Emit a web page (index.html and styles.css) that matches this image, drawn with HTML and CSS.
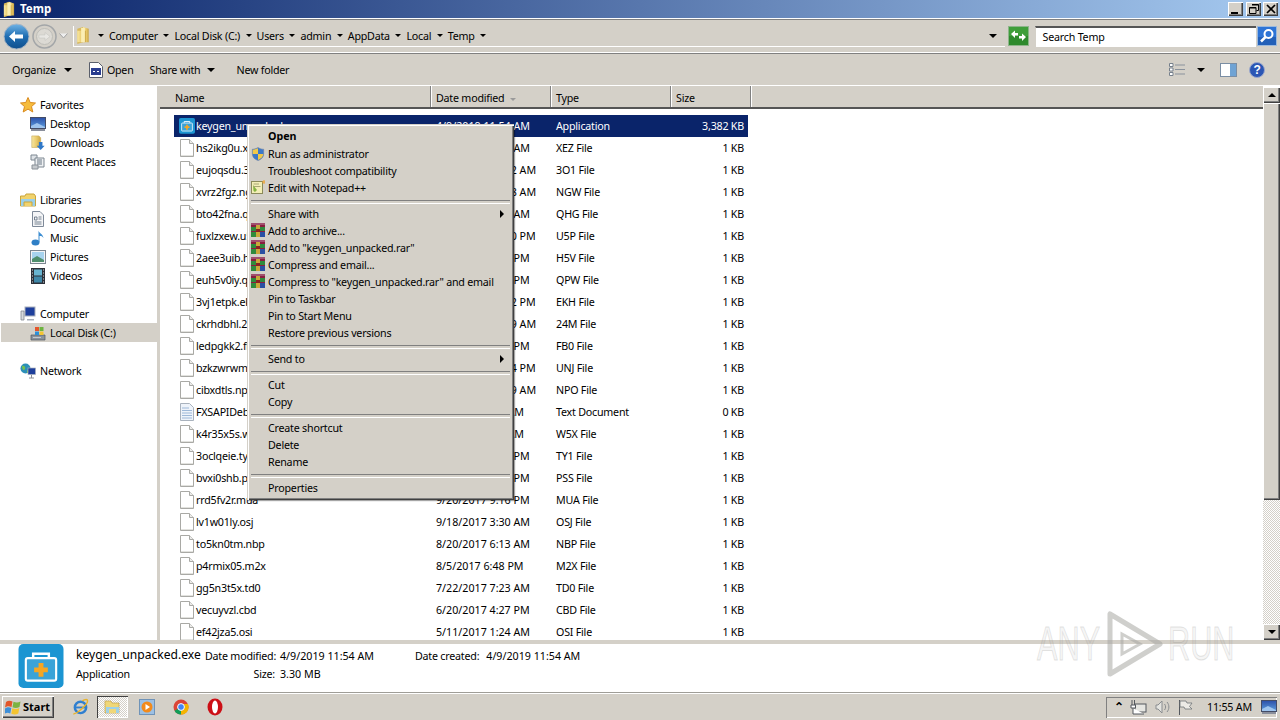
FILE: index.html
```html
<!DOCTYPE html>
<html lang="en">
<head>
<meta charset="utf-8">
<title>Temp</title>
<link rel="stylesheet" href="styles.css">
</head>
<body>
<svg class="defs" width="0" height="0" aria-hidden="true">
  <defs>
    <linearGradient id="gFolder" x1="0" y1="0" x2="1" y2="0"><stop offset="0" stop-color="#f8e7a0"/><stop offset=".55" stop-color="#e9c96a"/><stop offset="1" stop-color="#c9a544"/></linearGradient>
    <linearGradient id="gBack" x1="0" y1="0" x2="0" y2="1"><stop offset="0" stop-color="#6fb4e6"/><stop offset=".5" stop-color="#1f6db2"/><stop offset="1" stop-color="#0f4f8d"/></linearGradient>
    <linearGradient id="gDesk" x1="0" y1="0" x2="0" y2="1"><stop offset="0" stop-color="#2b4fa8"/><stop offset="1" stop-color="#5fa0e0"/></linearGradient>
    <symbol id="file" viewBox="0 0 14 18"><path d="M.5.5H9.5L13.500 4.500V17.500H.5Z" fill="#fff" stroke="#a9a9a5"/><path d="M9.500.5V4.500H13.500" fill="#ececea" stroke="#a9a9a5"/><path d="M1 16.500H13" stroke="#e2e2de"/></symbol>
    <symbol id="txt" viewBox="0 0 14 18"><path d="M.5.5H9.500L13.500 4.500V17.500H.5Z" fill="#eef3fa" stroke="#a9b2bd"/><path d="M2 5H9M2 7.500H12M2 10H12M2 12.500H12M2 15H12" stroke="#9db8d8"/></symbol>
    <symbol id="folder" viewBox="0 0 14 20"><path d="M1 3 7 1V17L1 19Z" fill="#d9b95c"/><path d="M7 1 13 3V17L7 17Z" fill="url(#gFolder)"/><path d="M1 5H10V17H1Z" fill="url(#gFolder)"/><path d="M5 2 9 2 9 17 5 17Z" fill="#fbeeb4"/></symbol>
    <symbol id="star" viewBox="0 0 16 16"><path d="M8 .5 10.200 5.500 15.500 6 11.500 9.600 12.800 15 8 12.100 3.200 15 4.500 9.600.5 6 5.800 5.500Z" fill="#f6bc3c" stroke="#d98a1e"/></symbol>
    <symbol id="desk" viewBox="0 0 16 14"><rect x=".5" y=".5" width="15" height="11" fill="url(#gDesk)" stroke="#444c66"/><path d="M1 9 7 6 15 10V11H1Z" fill="#9ec4ee"/><rect x="1" y="12" width="14" height="2" fill="#8a8f9c"/></symbol>
    <symbol id="dl" viewBox="0 0 16 18"><path d="M1 1H9L11 3V14H1Z" fill="url(#gFolder)" stroke="#c2a24e" stroke-width=".6"/><path d="M9 8H13V12H15.500L11 17 6.500 12H9Z" fill="#2f78c8"/></symbol>
    <symbol id="recent" viewBox="0 0 16 16"><path d="M1 1H7V6H1Z" fill="#dfe3e7" stroke="#7d8791"/><path d="M5 4H14V13H5Z" fill="#eef0f2" stroke="#7d8791"/><path d="M7 6H12M7 8H12M7 10H12" stroke="#6a7886"/><path d="M2 11H8V15H2Z" fill="#c5c9cd" stroke="#8a9198"/></symbol>
    <symbol id="lib" viewBox="0 0 16 14"><path d="M.5 3V13H15.500V3L14 1H6L5 3Z" fill="#f1d36d" stroke="#c9a53d"/><path d="M1 6H15V13H1Z" fill="#9bd0ea"/><path d="M4 13V9H12V13" fill="#f1d36d" stroke="#c9a53d"/></symbol>
    <symbol id="doc" viewBox="0 0 14 16"><path d="M1.500.5H9L12.500 4V15.500H1.500Z" fill="#f4f5f7" stroke="#7f8a99"/><path d="M3.500 6H6V9H3.500ZM7.500 6H10.500M7.500 8H10.500M3.500 11H10.500M3.500 13H10.500" stroke="#59677a" stroke-width=".8" fill="none"/></symbol>
    <symbol id="music" viewBox="0 0 14 16"><ellipse cx="4.500" cy="12.500" rx="4" ry="3" fill="#2f7fc6"/><path d="M7.500 12V.5C8 3 12 4 12.500 8 11 5.500 9 6 8.500 6V12Z" fill="#3d8ed2"/></symbol>
    <symbol id="pic" viewBox="0 0 16 14"><rect x=".5" y=".5" width="15" height="13" fill="#f3f4f6" stroke="#7d8791"/><rect x="2" y="2" width="12" height="10" fill="#a7d3ee"/><path d="M2 9 7 6 14 10V12H2Z" fill="#4f8f6d"/></symbol>
    <symbol id="vid" viewBox="0 0 14 16"><rect width="14" height="16" fill="#2c3038"/><rect x="3" y="1.500" width="8" height="6" fill="#68b4d0"/><rect x="3" y="8.500" width="8" height="6" fill="#3f87a8"/><path d="M1 2H2M1 5H2M1 8H2M1 11H2M1 14H2M12 2H13M12 5H13M12 8H13M12 11H13M12 14H13" stroke="#d4d6da"/></symbol>
    <symbol id="pc" viewBox="0 0 16 16"><rect x="5" y="1" width="10" height="9" fill="#1e3f9c" stroke="#a9b0bc"/><path d="M7 13H14V14.500H7Z" fill="#a9b0bc"/><path d="M1 5H4V14H1Z" fill="#d8dadd" stroke="#767c85" stroke-width=".7"/></symbol>
    <symbol id="disk" viewBox="0 0 16 16"><path d="M1 10H15V15H1Z" fill="#8b939c" stroke="#4f565e" stroke-width=".7"/><rect x="3" y="12" width="8" height="1" fill="#c4c9ce"/><rect x="5" y="2" width="4" height="4" fill="#e5552b"/><rect x="9.500" y="2" width="4" height="4" fill="#6cb33f"/><rect x="5" y="6.500" width="4" height="3.500" fill="#2d8fd8"/><rect x="9.500" y="6.500" width="4" height="3.500" fill="#f4c430"/></symbol>
    <symbol id="net" viewBox="0 0 16 16"><circle cx="5.500" cy="5.500" r="5" fill="#2c8fb8"/><path d="M2 3C4 2 6 4 5 6S2 7 2 3ZM7 7 10 9 7 10Z" fill="#76c152"/><rect x="8" y="5" width="7.500" height="6.500" fill="#1e3f9c" stroke="#a9b0bc" stroke-width=".7"/><path d="M11.500 12V15M9 15H14" stroke="#8b8f96"/></symbol>
    <symbol id="shield" viewBox="0 0 14 16"><path d="M7 .5C9 2 11 2.500 13.500 2.500V8C13.500 12 10 14.500 7 15.500 4 14.500.5 12 .5 8V2.500C3 2.500 5 2 7 .5Z" fill="#3d79c9" stroke="#6d7fa0" stroke-width=".6"/><path d="M7 1.500V8H1V3C3 3 5 2.500 7 1.500Z" fill="#f2c94a"/><path d="M7 8H13C13 11 10 13.800 7 14.800Z" fill="#f2c94a"/></symbol>
    <symbol id="npp" viewBox="0 0 14 14"><rect x=".5" y="1.500" width="11" height="12" fill="#f3eeb6" stroke="#8b8a5a"/><path d="M2 5 6 10 4 12 2.500 11Z" fill="#86b341"/><path d="M2.500 4H8M2.500 6.500H9.500" stroke="#a8a674"/><path d="M13 0V4M11 2H14" stroke="#f0a02a"/></symbol>
    <symbol id="rar" viewBox="0 0 14 14"><rect width="14" height="14" fill="#8a1d3f"/><rect width="14" height="2" fill="#a0506e"/><rect y="4" width="5" height="4" fill="#2f8a3c"/><rect x="9" y="4" width="5" height="4" fill="#2f8a3c"/><rect y="9" width="5" height="5" fill="#2f8a3c"/><rect x="9" y="9" width="5" height="5" fill="#2a4fa3"/><rect x="5" y="2" width="4" height="12" fill="#c9a83a"/><rect x="5" y="6" width="4" height="3" fill="#8b2222"/></symbol>
    <symbol id="case" viewBox="0 0 46 46"><rect width="46" height="45" rx="5" fill="#1c95d2"/><path d="M15 14V10H31V14" fill="none" stroke="#fff" stroke-width="2.500"/><rect x="7.500" y="14.500" width="31" height="23" rx="2" fill="#3aa3d8" stroke="#fff" stroke-width="2.200"/><path d="M20.500 19.500H25.500V24H30V29H25.500V33.500H20.500V29H16V24H20.500Z" fill="#f5a623"/></symbol>
    <symbol id="openapp" viewBox="0 0 14 16"><path d="M.5.5H9.500L13.500 4.500V15.500H.5Z" fill="#fff" stroke="#5a5f6b"/><rect x="2" y="6" width="10" height="7" fill="#2a3d8f"/><path d="M4 9.500H6M8 9.500H10" stroke="#fff"/></symbol>
  </defs>
</svg>

<div class="window">
  <header class="titlebar">
    <svg class="ic-title"><use href="#folder"/></svg>
    <span class="title-text">Temp</span>
    <div class="winbtns">
      <button class="winbtn"><span class="glyph-min"></span></button>
      <button class="winbtn"><svg width="10" height="10" viewBox="0 0 10 10"><path d="M3 .5H9.500V6.500H7.500M.5 3.500H7V9.500H.5Z" fill="none" stroke="#000"/><path d="M3 1H9.500M.5 4H7" stroke="#000"/></svg></button>
      <button class="winbtn"><svg width="10" height="10" viewBox="0 0 10 10"><path d="M1 1 9 9M9 1 1 9" stroke="#000" stroke-width="1.700"/></svg></button>
    </div>
  </header>

  <div class="addressrow">
    <svg class="navbtn" width="27" height="27" viewBox="0 0 27 27"><circle cx="13.500" cy="13.500" r="12.500" fill="url(#gBack)" stroke="#a9b6c4"/><path d="M6 13.500 12 8V11.500H20V15.500H12V19Z" fill="#fff"/></svg>
    <svg class="navbtn fwd" width="25" height="25" viewBox="0 0 25 25"><circle cx="12.500" cy="12.500" r="11.500" fill="#d4d0c8" stroke="#a3a6a8" stroke-width="1.500"/><circle cx="12.500" cy="12.500" r="8" fill="#dcdad4" stroke="#bdbdb8"/><path d="M18 12.500 13 8.500V11H7V14H13V16.500Z" fill="#e8e7e3" stroke="#c0c0bc" stroke-width=".5"/></svg>
    <svg class="navdrop" width="9" height="6" viewBox="0 0 9 6"><path d="M.5.500 4.500 5 8.500.500" fill="#eee" stroke="#a0a0a0"/></svg>
    <div class="addrbox">
      <svg class="ic-addr"><use href="#folder"/></svg>
      <span class="crumb"><i class="tri"></i><span class="crumb-t">Computer</span></span>
      <span class="crumb"><i class="tri"></i><span class="crumb-t">Local Disk (C:)</span></span>
      <span class="crumb"><i class="tri"></i><span class="crumb-t">Users</span></span>
      <span class="crumb"><i class="tri"></i><span class="crumb-t">admin</span></span>
      <span class="crumb"><i class="tri"></i><span class="crumb-t">AppData</span></span>
      <span class="crumb"><i class="tri"></i><span class="crumb-t">Local</span></span>
      <span class="crumb"><i class="tri"></i><span class="crumb-t">Temp</span></span>
      <i class="tri last"></i>
      <i class="tri big addr-drop"></i>
    </div>
    <svg class="refresh" width="21" height="20" viewBox="0 0 21 20"><rect x=".5" y=".5" width="20" height="19" fill="#3f9e3a" stroke="#8db58a"/><rect x="1" y="10" width="19" height="9" fill="#2f8a2d"/><path d="M3 8 7 4.500V7H10V9.500H7V12ZM18 11 14 15V12.500H11V10H14V7.500Z" fill="#fff"/></svg>
    <div class="searchbox">Search Temp</div>
    <svg class="searchbtn" width="20" height="20" viewBox="0 0 20 20"><rect x=".5" y=".5" width="19" height="19" fill="#2e74d6" stroke="#9cb9dc"/><rect x="1" y="11" width="18" height="8" fill="#2360b8"/><circle cx="11.500" cy="8" r="4" fill="#2e74d6" stroke="#fff" stroke-width="2"/><path d="M8.500 11 4 15.500" stroke="#fff" stroke-width="2.500"/></svg>
  </div>

  <nav class="toolbar">
    <span class="tool tool-org">Organize<i class="tri big"></i></span>
    <span class="tool tool-open"><svg class="ic14"><use href="#openapp"/></svg>Open</span>
    <span class="tool tool-share">Share with<i class="tri big"></i></span>
    <span class="tool tool-new">New folder</span>
    <div class="toolright">
      <svg width="17" height="13" viewBox="0 0 17 13"><path d="M.5.500H4V3.500H.5ZM.5 5H4V8H.5ZM.5 9.500H4V12.500H.5Z" fill="#fff" stroke="#76808c"/><path d="M6 2H16M6 6.500H16M6 11H16" stroke="#8a929c"/></svg>
      <i class="tri big view-drop"></i>
      <svg class="pane-ic" width="17" height="14" viewBox="0 0 17 14"><rect x=".5" y=".5" width="16" height="13" fill="#fff" stroke="#7a8ea4"/><rect x="10" y="1" width="6" height="12" fill="#6fa3d4"/></svg>
      <svg class="help-ic" width="16" height="16" viewBox="0 0 16 16"><circle cx="8" cy="8" r="7.500" fill="#2b56b4" stroke="#9aa7cc"/><text x="8" y="12" text-anchor="middle" class="help-q">?</text></svg>
    </div>
  </nav>

  <main class="content">
    <aside class="sidebar">
      <div class="navgroup">
        <div class="navitem top"><svg class="ic16"><use href="#star"/></svg>Favorites</div>
        <div class="navitem"><svg class="ic16"><use href="#desk"/></svg>Desktop</div>
        <div class="navitem"><svg class="ic16"><use href="#dl"/></svg>Downloads</div>
        <div class="navitem"><svg class="ic16"><use href="#recent"/></svg>Recent Places</div>
      </div>
      <div class="navgroup">
        <div class="navitem top"><svg class="ic16"><use href="#lib"/></svg>Libraries</div>
        <div class="navitem"><svg class="ic16"><use href="#doc"/></svg>Documents</div>
        <div class="navitem"><svg class="ic16"><use href="#music"/></svg>Music</div>
        <div class="navitem"><svg class="ic16"><use href="#pic"/></svg>Pictures</div>
        <div class="navitem"><svg class="ic16"><use href="#vid"/></svg>Videos</div>
      </div>
      <div class="navgroup">
        <div class="navitem top"><svg class="ic16"><use href="#pc"/></svg>Computer</div>
        <div class="navitem active"><svg class="ic16"><use href="#disk"/></svg>Local Disk (C:)</div>
      </div>
      <div class="navgroup">
        <div class="navitem top"><svg class="ic16"><use href="#net"/></svg>Network</div>
      </div>
    </aside>

    <section class="files">
      <div class="colhead">
        <div class="col col-name">Name</div>
        <div class="col col-date">Date modified<i class="sort"></i></div>
        <div class="col col-type">Type</div>
        <div class="col col-size">Size</div>
        <div class="col col-rest"></div>
      </div>
      <div class="rows">
        <div class="row selected"><span class="n"><svg class="ic-app"><use href="#case"/></svg>keygen_unpacked.exe</span><span class="d">4/9/2019 11:54 AM</span><span>Application</span><span class="s">3,382 KB</span></div>
        <div class="row"><span class="n"><svg class="ic-file"><use href="#file"/></svg>hs2ikg0u.xez</span><span class="d">3/19/2019 8:05 AM</span><span>XEZ File</span><span class="s">1 KB</span></div>
        <div class="row"><span class="n"><svg class="ic-file"><use href="#file"/></svg>eujoqsdu.3o1</span><span class="d">3/12/2019 10:22 AM</span><span>3O1 File</span><span class="s">1 KB</span></div>
        <div class="row"><span class="n"><svg class="ic-file"><use href="#file"/></svg>xvrz2fgz.ngw</span><span class="d">2/26/2019 11:38 AM</span><span>NGW File</span><span class="s">1 KB</span></div>
        <div class="row"><span class="n"><svg class="ic-file"><use href="#file"/></svg>bto42fna.qhg</span><span class="d">2/14/2019 7:25 AM</span><span>QHG File</span><span class="s">1 KB</span></div>
        <div class="row"><span class="n"><svg class="ic-file"><use href="#file"/></svg>fuxlzxew.u5p</span><span class="d">1/30/2019 10:40 PM</span><span>U5P File</span><span class="s">1 KB</span></div>
        <div class="row"><span class="n"><svg class="ic-file"><use href="#file"/></svg>2aee3uib.h5v</span><span class="d">1/12/2019 6:19 PM</span><span>H5V File</span><span class="s">1 KB</span></div>
        <div class="row"><span class="n"><svg class="ic-file"><use href="#file"/></svg>euh5v0iy.qpw</span><span class="d">1/10/2019 5:57 PM</span><span>QPW File</span><span class="s">1 KB</span></div>
        <div class="row"><span class="n"><svg class="ic-file"><use href="#file"/></svg>3vj1etpk.ekh</span><span class="d">12/2/2018 11:22 PM</span><span>EKH File</span><span class="s">1 KB</span></div>
        <div class="row"><span class="n"><svg class="ic-file"><use href="#file"/></svg>ckrhdbhl.24m</span><span class="d">11/2/2018 10:09 AM</span><span>24M File</span><span class="s">1 KB</span></div>
        <div class="row"><span class="n"><svg class="ic-file"><use href="#file"/></svg>ledpgkk2.fb0</span><span class="d">10/2/2018 3:47 PM</span><span>FB0 File</span><span class="s">1 KB</span></div>
        <div class="row"><span class="n"><svg class="ic-file"><use href="#file"/></svg>bzkzwrwm.unj</span><span class="d">10/9/2018 11:14 PM</span><span>UNJ File</span><span class="s">1 KB</span></div>
        <div class="row"><span class="n"><svg class="ic-file"><use href="#file"/></svg>cibxdtls.npo</span><span class="d">9/30/2018 11:29 AM</span><span>NPO File</span><span class="s">1 KB</span></div>
        <div class="row"><span class="n"><svg class="ic-file"><use href="#txt"/></svg>FXSAPIDebugLog.txt</span><span class="d">7/1/2018 4:02 AM</span><span>Text Document</span><span class="s">0 KB</span></div>
        <div class="row"><span class="n"><svg class="ic-file"><use href="#file"/></svg>k4r35x5s.w5x</span><span class="d">6/5/2018 6:31 AM</span><span>W5X File</span><span class="s">1 KB</span></div>
        <div class="row"><span class="n"><svg class="ic-file"><use href="#file"/></svg>3oclqeie.ty1</span><span class="d">5/24/2018 2:56 PM</span><span>TY1 File</span><span class="s">1 KB</span></div>
        <div class="row"><span class="n"><svg class="ic-file"><use href="#file"/></svg>bvxi0shb.pss</span><span class="d">3/2/2018 11:44 PM</span><span>PSS File</span><span class="s">1 KB</span></div>
        <div class="row"><span class="n"><svg class="ic-file"><use href="#file"/></svg>rrd5fv2r.mua</span><span class="d">9/20/2017 9:16 PM</span><span>MUA File</span><span class="s">1 KB</span></div>
        <div class="row"><span class="n"><svg class="ic-file"><use href="#file"/></svg>lv1w01ly.osj</span><span class="d">9/18/2017 3:30 AM</span><span>OSJ File</span><span class="s">1 KB</span></div>
        <div class="row"><span class="n"><svg class="ic-file"><use href="#file"/></svg>to5kn0tm.nbp</span><span class="d">8/20/2017 6:13 AM</span><span>NBP File</span><span class="s">1 KB</span></div>
        <div class="row"><span class="n"><svg class="ic-file"><use href="#file"/></svg>p4rmix05.m2x</span><span class="d">8/5/2017 6:48 PM</span><span>M2X File</span><span class="s">1 KB</span></div>
        <div class="row"><span class="n"><svg class="ic-file"><use href="#file"/></svg>gg5n3t5x.td0</span><span class="d">7/22/2017 7:23 AM</span><span>TD0 File</span><span class="s">1 KB</span></div>
        <div class="row"><span class="n"><svg class="ic-file"><use href="#file"/></svg>vecuyvzl.cbd</span><span class="d">6/20/2017 4:27 PM</span><span>CBD File</span><span class="s">1 KB</span></div>
        <div class="row"><span class="n"><svg class="ic-file"><use href="#file"/></svg>ef42jza5.osi</span><span class="d">5/11/2017 1:24 AM</span><span>OSI File</span><span class="s">1 KB</span></div>
      </div>
    </section>

    <div class="scrollbar">
      <div class="sbtn"><i class="tri-up"></i></div>
      <div class="sthumb"></div>
      <div class="strack"></div>
      <div class="sbtn"><i class="tri big"></i></div>
    </div>
  </main>

  <footer class="details">
    <svg class="ic-case"><use href="#case"/></svg>
    <div class="det-main">
      <div class="det-name">keygen_unpacked.exe</div>
      <div>Application</div>
    </div>
    <div class="det-grid">
      <span class="lab">Date modified:</span><span class="d">4/9/2019 11:54 AM</span>
      <span class="lab">Size:</span><span class="d">3.30 MB</span>
    </div>
    <div class="det-created">
      <span class="lab">Date created:</span><span class="d">4/9/2019 11:54 AM</span>
    </div>
  </footer>
</div>

<div class="taskbar">
  <button class="startbtn">
    <svg width="16" height="16" viewBox="0 0 16 16"><path d="M1 3C3 1.500 5 1.500 7.500 2.500L6.500 8C4 7 2.500 7 0 8.500Z" fill="#e2562a"/><path d="M8.500 2.800C11 3.800 13 3.800 15.500 2.500L14.500 8C12 9.300 10 9.300 7.500 8.300Z" fill="#7cb342"/><path d="M0 9.500C2.500 8 4 8 6.300 9L5.300 14.500C3 13.500 1.500 13.500-1 15Z" fill="#3d8fd8"/><path d="M7.300 9.300C10 10.300 12 10.300 14.300 9L13.300 14.500C11 15.800 9 15.800 6.300 14.800Z" fill="#f4c430"/></svg>
    Start
  </button>
  <div class="quick">
    <svg class="q-ie" width="17" height="18" viewBox="0 0 18 18"><circle cx="9" cy="9.500" r="6" fill="none" stroke="#2f7fd0" stroke-width="2.600"/><path d="M4 9.500H15" stroke="#2f7fd0" stroke-width="2"/><path d="M1.500 16C3 17 9 13 15 6 17 3.500 17 1 15 1 13 1 11 2.500 11 2.500" fill="none" stroke="#e8b32a" stroke-width="1.500"/></svg>
    <span class="task-active"><svg width="18" height="16" viewBox="0 0 18 16"><path d="M1 2H7L8 4H15V14H1Z" fill="#f0d777" stroke="#c2a24e" stroke-width=".7"/><path d="M2 8H15V14H2Z" fill="#9ed1e8"/><path d="M5 14V10H12V14" fill="#f0d777"/></svg></span>
    <svg class="q-media" width="16" height="16" viewBox="0 0 16 16"><rect x=".5" y=".5" width="15" height="15" fill="#9cc0e4" stroke="#6f93b8"/><circle cx="8" cy="8" r="5.500" fill="#f28a1c"/><path d="M6.500 5 11 8 6.500 11Z" fill="#fff"/></svg>
    <svg class="q-next" width="16" height="16" viewBox="0 0 16 16"><circle cx="8" cy="8" r="7.500" fill="#db4437"/><path d="M8 8 1.500 11.700A7.500 7.500 0 0 0 8 15.500Z" fill="#0f9d58"/><path d="M8 8 8 15.500A7.500 7.500 0 0 0 15 5H8Z" fill="#f4b400"/><circle cx="8" cy="8" r="3.400" fill="#4285f4" stroke="#fff"/></svg>
    <svg class="q-next" width="16" height="18" viewBox="0 0 16 18"><ellipse cx="8" cy="9" rx="7.500" ry="8.500" fill="#cc0f16"/><ellipse cx="8" cy="9" rx="3" ry="6.500" fill="#fff"/></svg>
  </div>
  <div class="tray">
    <i class="tray-up">&#8963;</i>
    <svg width="17" height="16" viewBox="0 0 17 16"><rect x="5" y="5" width="11" height="8" fill="#e6e6e2" stroke="#55595f"/><path d="M2 1V6M4.500 1V6M1 6H5.500V9H1ZM3 9V15H14" fill="#fff" stroke="#55595f"/></svg>
    <svg width="16" height="14" viewBox="0 0 16 14"><path d="M1 5H3L7 1V13L3 9H1Z" fill="#e4e4e0" stroke="#8a8d90"/><path d="M9.500 4C11 6 11 8 9.500 10M12 2C14.500 5 14.500 9 12 12" fill="none" stroke="#8a8d90"/></svg>
    <svg class="tray-flag" width="15" height="15" viewBox="0 0 15 15"><path d="M1.500 0V15" stroke="#55595f"/><path d="M2 1H8L9 3H14L11.500 6.500 14 9H7L6 7H2Z" fill="#ecebe6" stroke="#6f7377" stroke-width=".8"/></svg>
    <span class="clock">11:55 AM</span>
    <svg class="desk-ic"><use href="#desk"/></svg>
  </div>
</div>

<div class="menu">
  <div class="mi bold">Open</div>
  <div class="mi"><svg class="mic low"><use href="#shield"/></svg>Run as administrator</div>
  <div class="mi">Troubleshoot compatibility</div>
  <div class="mi"><svg class="mic"><use href="#npp"/></svg>Edit with Notepad++</div>
  <div class="msep"></div>
  <div class="mi">Share with<i class="marrow"></i></div>
  <div class="mi"><svg class="mic"><use href="#rar"/></svg>Add to archive...</div>
  <div class="mi"><svg class="mic"><use href="#rar"/></svg>Add to "keygen_unpacked.rar"</div>
  <div class="mi"><svg class="mic"><use href="#rar"/></svg>Compress and email...</div>
  <div class="mi"><svg class="mic"><use href="#rar"/></svg>Compress to "keygen_unpacked.rar" and email</div>
  <div class="mi">Pin to Taskbar</div>
  <div class="mi">Pin to Start Menu</div>
  <div class="mi">Restore previous versions</div>
  <div class="msep"></div>
  <div class="mi">Send to<i class="marrow"></i></div>
  <div class="msep"></div>
  <div class="mi">Cut</div>
  <div class="mi">Copy</div>
  <div class="msep"></div>
  <div class="mi">Create shortcut</div>
  <div class="mi">Delete</div>
  <div class="mi">Rename</div>
  <div class="msep"></div>
  <div class="mi">Properties</div>
</div>

<div class="watermark">
  <span class="wm-text">ANY</span>
  <svg width="60" height="68" viewBox="0 0 60 68"><path d="M6 4V64L56 34Z" fill="none" stroke="#a8a8a4" stroke-width="5" stroke-linejoin="round"/><path d="M18 24V44L36 34Z" fill="none" stroke="#a8a8a4" stroke-width="3"/></svg>
  <span class="wm-text">RUN</span>
</div>
</body>
</html>
```
FILE: styles.css
```css
* { box-sizing: border-box; }
html, body { margin: 0; padding: 0; }
body {
  width: 1280px; height: 720px; overflow: hidden; position: relative;
  background: #d4d0c8; color: #000;
  font: 10.7px/1.2 "Noto Sans", "Liberation Sans", sans-serif;
  letter-spacing: -.22px;
}
.defs { position: absolute; }
i { display: inline-block; font-style: normal; }
svg { display: block; flex: none; }
button { font: inherit; padding: 0; letter-spacing: inherit; }

.window { height: 693px; display: flex; flex-direction: column; }

/* title bar */
.titlebar {
  height: 18px; flex: none; display: flex; align-items: center;
  background: linear-gradient(90deg, #0a246a 0%, #a6caf0 100%);
  color: #fff; font-weight: 700; font-size: 11.5px; padding-left: 3px; letter-spacing: 0;
}
.ic-title { width: 12px; height: 17px; }
.title-text { margin-left: 5px; }
.winbtns { margin-left: auto; display: flex; padding-right: 2px; }
.winbtn {
  width: 15px; height: 14px; background: #d4d0c8; display: flex; align-items: center; justify-content: center;
  border: 0; box-shadow: inset 1px 1px 0 #fff, inset -1px -1px 0 #404040, inset -2px -2px 0 #808080;
}
.winbtn:nth-child(2) { margin: 0 2px 0 3px; }
.glyph-min { width: 7px; height: 2px; background: #000; margin-top: 7px; margin-right: 2px; }

/* address row */
.addressrow {
  height: 36px; flex: none; display: flex; align-items: center;
  padding: 0 3px;
  border-top: 1px solid #fff; border-bottom: 1px solid #808080;
  box-shadow: inset 0 1px 0 #808080, inset 0 -1px 0 #fff;
}
.fwd { margin-left: 2px; }
.navdrop { margin-left: 2px; }
.addrbox {
  width: 934px; height: 21px; margin-left: 5px; display: flex; align-items: center;
  border-left: 1px solid #fff; border-bottom: 1px solid #fff; position: relative; padding-left: 2px;
}
.ic-addr { width: 14px; height: 19px; margin-right: 8px; }
.crumb { display: inline-flex; align-items: center; margin-right: 5.5px; white-space: nowrap; }
.crumb-t { padding-top: 2px; }
.tri {
  width: 0; height: 0; border-left: 3px solid transparent; border-right: 3px solid transparent;
  border-top: 3px solid #000; margin-right: 5px;
}
.tri.big { border-left-width: 4px; border-right-width: 4px; border-top-width: 4px; margin-right: 0; }
.addr-drop { position: absolute; right: 8px; top: 8px; }
.refresh { margin-left: 3px; }
.searchbox {
  width: 222px; height: 21px; margin-left: 6px; background: #fff; padding: 3px 0 0 7px;
  border-top: 2px solid #555; border-left: 1px solid #d4d0c8;
}
.searchbtn { margin-left: 1px; }

/* toolbar */
.toolbar { height: 31px; flex: none; display: flex; align-items: center; padding-left: 12px; }
.tool { display: inline-flex; align-items: center; white-space: nowrap; line-height: 15px; padding-top: 2px; }
.tool .tri { margin-left: 8px; margin-top: -2px; }
.tool-share .tri { margin-left: 7px; }
.tool-open { margin-left: 17px; }
.ic14 { width: 14px; height: 16px; margin: -2px 4px 0 0; }
.tool-share { margin-left: 16px; }
.tool-new { margin-left: 21px; }
.toolright { margin-left: auto; display: flex; align-items: center; padding-right: 15px; }
.view-drop { margin-left: 11px; }
.pane-ic { margin-left: 15px; }
.help-ic { margin-left: 12px; }
.help-q { font: 700 12px "Liberation Sans", sans-serif; fill: #fff; }

/* content */
.content { flex: 1; min-height: 0; display: flex; background: #fff; border-top: 1px solid #fff; overflow: hidden; }
.sidebar { width: 160px; flex: none; padding-top: 9px; border-right: 3px solid #d4d0c8; overflow: hidden; }
.navgroup { margin-bottom: 19px; }
.navitem { height: 19px; display: flex; align-items: center; padding: 2px 0 0 29px; margin-left: 1px; white-space: nowrap; }
.navitem.top { padding-left: 19px; }
.navitem.active { background: #d4d0c8; margin-right: -3px; }
.ic16 { width: 16px; height: 16px; margin: -2px 4px 0 0; }

.files { flex: 1; min-width: 0; display: flex; flex-direction: column; overflow: hidden; }
.colhead { height: 23px; flex: none; display: flex; background: #d4d0c8; border-bottom: 2px solid #555; }
.col { padding: 6px 0 0 5px; border-right: 1px solid #808080; box-shadow: 1px 0 0 #fff; position: relative; white-space: nowrap; }
.col-name { width: 271px; padding-left: 15px; }
.col-date { width: 120px; display: flex; }
.col-type { width: 120px; }
.col-size { width: 80px; }
.col-rest { flex: 1; border-right: 0; box-shadow: none; }
.sort { width: 0; height: 0; margin: 6px 0 0 6px; border-left: 3px solid transparent; border-right: 3px solid transparent; border-top: 3px solid #9a9a9a; }
.rows { padding: 6px 0 0 14px; }
.row {
  width: 574px; height: 22px; display: grid; grid-template-columns: 262px 120px 120px 68px;
  align-items: center; white-space: nowrap;
}
.d { letter-spacing: 0; }
.row .s { text-align: right; }
.row .n { display: flex; align-items: center; padding-left: 6px; overflow: hidden; }
.row.selected { background: #0a246a; color: #fff; }
.ic-file { width: 14px; height: 18px; margin-right: 2px; }
.ic-app { width: 16px; height: 16px; margin: 0 1px 0 -1px; }

.scrollbar { width: 17px; flex: none; display: flex; flex-direction: column; padding-top: 1px; }
.sbtn {
  height: 16px; flex: none; background: #d4d0c8; display: flex; align-items: center; justify-content: center;
  box-shadow: inset 1px 1px 0 #fff, inset -1px -1px 0 #404040, inset -2px -2px 0 #808080;
}
.tri-up { width: 0; height: 0; border-left: 4px solid transparent; border-right: 4px solid transparent; border-bottom: 4px solid #000; }
.sthumb { height: 397px; flex: none; background: #d4d0c8; box-shadow: inset 1px 1px 0 #fff, inset -1px -1px 0 #404040, inset -2px -2px 0 #808080; }
.strack { flex: 1; background: repeating-conic-gradient(#d4d0c8 0 25%, #fff 0 50%) 0 0 / 2px 2px; }

/* details */
.details {
  height: 53px; flex: none; display: flex; background: #fff; white-space: nowrap;
  border-top: 4px solid #d4d0c8; border-bottom: 1px solid #9f9d97; padding-left: 18px;
}
.ic-case { width: 46px; height: 45px; }
.det-main { width: 129px; margin-left: 12px; padding-top: 4px; }
.det-main > div { height: 20px; }
.det-name { font-size: 12.1px; letter-spacing: 0; }
.det-grid { display: grid; grid-template-columns: 70px auto; column-gap: 5px; grid-auto-rows: 18px; padding-top: 6px; width: 210px; }
.lab { text-align: right; }
.det-created { display: flex; gap: 7px; padding-top: 6px; }

/* taskbar */
.taskbar {
  height: 27px; display: flex; align-items: center; border-top: 1px solid #fff; background: #d4d0c8; padding: 0 3px 0 2px;
}
.startbtn {
  width: 52px; height: 22px; display: flex; align-items: center; gap: 2px; padding-left: 3px;
  background: #d4d0c8; border: 0; font-weight: 700; font-size: 11px; letter-spacing: 0;
  box-shadow: inset 1px 1px 0 #fff, inset -1px -1px 0 #404040, inset -2px -2px 0 #808080;
}
.quick { display: flex; align-items: center; margin-left: 18px; }
.task-active {
  width: 31px; height: 22px; display: flex; align-items: center; justify-content: center; margin-left: 8px;
  background: repeating-conic-gradient(#d4d0c8 0 25%, #fff 0 50%) 0 0 / 2px 2px;
  box-shadow: inset 1px 1px 0 #404040, inset -1px -1px 0 #fff;
}
.q-media { margin-left: 11px; }
.q-next { margin-left: 18px; }
.tray {
  margin-left: auto; width: 171px; height: 21px; display: flex; align-items: center; padding-left: 8px; gap: 8px;
  box-shadow: inset 1px 1px 0 #808080, inset -1px -1px 0 #fff; white-space: nowrap;
}
.tray-up { font-size: 12px; font-weight: 700; width: 8px; line-height: 10px; }
.tray-flag { margin-left: -1px; }
.clock { margin-left: 6px; }
.desk-ic { width: 16px; height: 14px; margin-left: 1px; }

/* context menu */
.menu {
  position: absolute; left: 247px; top: 124px; width: 267px; height: 376px; padding: 4px 3px 3px;
  background: #d4d0c8;
  box-shadow: inset 1px 1px 0 #d4d0c8, inset 2px 2px 0 #fff, inset -1px -1px 0 #404040, inset -2px -2px 0 #808080, 1px 1px 1px rgba(0,0,0,.35);
}
.mi { height: 17px; padding: 2px 0 0 18px; display: flex; align-items: center; position: relative; white-space: nowrap; }
.mi.bold { font-weight: 700; padding-top: 0; letter-spacing: 0; }
.mic { width: 14px; height: 14px; position: absolute; left: 1px; top: 1px; }
.mic.low { top: 2px; }
.marrow { position: absolute; right: 7px; top: 5px; width: 0; height: 0; border-top: 4px solid transparent; border-bottom: 4px solid transparent; border-left: 4px solid #000; }
.msep { height: 9px; margin: 0 1px; position: relative; }
.msep::after { content: ""; position: absolute; left: 0; right: 0; top: 4px; height: 2px; border-top: 1px solid #808080; border-bottom: 1px solid #fff; }

/* watermark */
.watermark {
  position: absolute; left: 1037px; top: 609px; height: 70px; display: flex; align-items: center; gap: 4px;
  opacity: .55; pointer-events: none;
}
.wm-text {
  width: 63px; display: block; font: 400 48px/1 "Liberation Sans", sans-serif; color: rgba(150,150,145,.18); letter-spacing: 0;
  -webkit-text-stroke: 1px rgba(130,130,125,.4); transform: scaleX(.64); transform-origin: 0 50%; white-space: nowrap;
}
```
